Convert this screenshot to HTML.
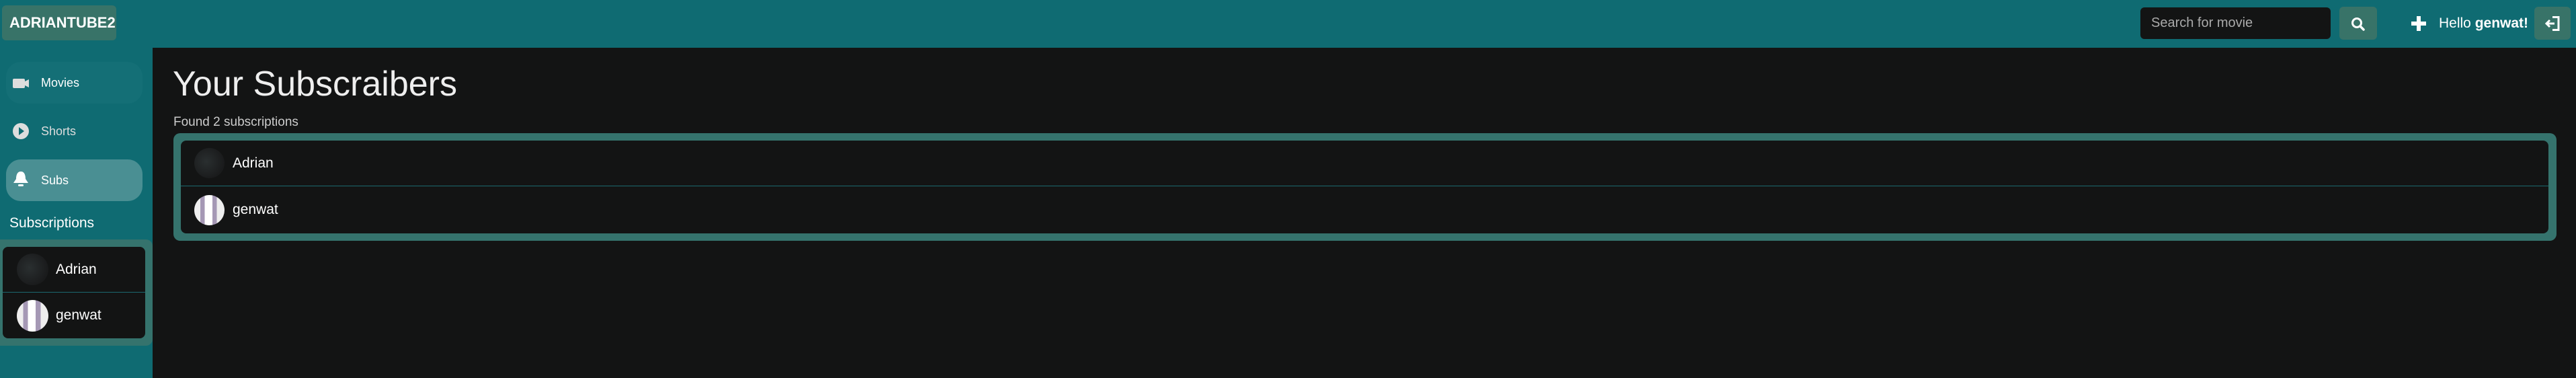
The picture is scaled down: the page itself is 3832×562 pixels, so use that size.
<!DOCTYPE html>
<html><head><style>
*{margin:0;padding:0;box-sizing:border-box}
body{width:3832px;height:562px;background:#0f6b72;font-family:"Liberation Sans",sans-serif;position:relative;overflow:hidden;color:#fff}
.abs{position:absolute}
.logo{left:3px;top:8px;width:170px;height:52px;background:#387368;border-radius:6px;font-weight:bold;font-size:22px;line-height:52px;padding-left:11px;color:#fff}
.pill{left:9px;width:203px;height:62px;border-radius:22px;font-size:18px;line-height:62px;padding-left:52px}
.main{left:227px;top:71px;width:3605px;height:491px;background:#131414}
.box{background:#35736d;border-radius:10px}
.inner{background:#131414;border-radius:8px;position:absolute}
.row{position:absolute;left:0;right:0;display:flex;align-items:center;font-size:21px}
.av{border-radius:50%;flex:none}
.a1{background:radial-gradient(circle at 40% 45%,#2a2f30,#1a1b1c 70%)}
.a2{background:linear-gradient(90deg,#eee 0 20%,#a598b5 20% 35%,#fff 35% 60%,#a598b5 60% 75%,#eee 75%)}
</style></head><body>
<div class="abs logo">ADRIANTUBE2</div>
<div class="abs pill" style="top:92px;background:#146f76">Movies</div>
<svg class="abs" style="left:19px;top:117px" width="25" height="14"><rect x="0" y="0" width="18" height="14" rx="2" fill="#ddd"/><path d="M18 4 L24 1 V13 L18 10Z" fill="#ddd"/></svg>
<div class="abs pill" style="top:164px;color:#ddd">Shorts</div>
<svg class="abs" style="left:19px;top:183px" width="24" height="24"><circle cx="12" cy="12" r="12" fill="#ddd"/><path d="M9 6 L17 12 L9 18Z" fill="#0f6b72"/></svg>
<div class="abs pill" style="top:237px;background:#4a8f93">Subs</div>
<svg class="abs" style="left:19px;top:254px" width="24" height="24"><path d="M12 1 C6 1 5 8 5 12 L1 18 H23 L19 12 C19 8 18 1 12 1Z" fill="#fff"/><rect x="8" y="20" width="8" height="3" rx="1.5" fill="#fff"/></svg>
<div class="abs" style="left:14px;top:320px;font-size:21px">Subscriptions</div>
<div class="abs box" style="left:0;top:356px;width:227px;height:158px;border-radius:0 10px 10px 0"></div>
<div class="inner" style="left:4px;top:367px;width:212px;height:136px">
 <div class="row" style="top:0;height:68px;border-bottom:1px solid #1b6a70"><div class="av a1" style="width:47px;height:47px;margin-left:21px"></div><span style="margin-left:11px">Adrian</span></div>
 <div class="row" style="top:68px;height:68px"><div class="av a2" style="width:47px;height:47px;margin-left:21px"></div><span style="margin-left:11px">genwat</span></div>
</div>
<div class="abs main"></div>
<div class="abs" style="left:257px;top:95px;font-size:52px;color:#eee">Your Subscraibers</div>
<div class="abs" style="left:258px;top:171px;font-size:19px;color:#ccc">Found 2 subscriptions</div>
<div class="abs box" style="left:258px;top:198px;width:3545px;height:160px"></div>
<div class="inner" style="left:269px;top:209px;width:3522px;height:138px">
 <div class="row" style="top:0;height:68px;border-bottom:1px solid #1b6a70"><div class="av a1" style="width:45px;height:45px;margin-left:20px"></div><span style="margin-left:12px">Adrian</span></div>
 <div class="row" style="top:68px;height:70px"><div class="av a2" style="width:45px;height:45px;margin-left:20px"></div><span style="margin-left:12px">genwat</span></div>
</div>
<div class="abs" style="left:3184px;top:11px;width:283px;height:47px;background:#131414;border-radius:6px;font-size:20px;color:#aaa;line-height:47px;padding-left:16px">Search for movie</div>
<div class="abs" style="left:3480px;top:10px;width:56px;height:49px;background:#387368;border-radius:6px"></div>
<svg class="abs" style="left:3497px;top:25px" width="22" height="22"><circle cx="9" cy="9" r="6.5" stroke="#fff" stroke-width="3" fill="none"/><path d="M14 14 L19 19" stroke="#fff" stroke-width="3.5" stroke-linecap="round"/></svg>
<svg class="abs" style="left:3587px;top:24px" width="22" height="22"><path d="M11 0 V22 M0 11 H22" stroke="#fff" stroke-width="6"/></svg>
<div class="abs" style="left:3628px;top:23px;font-size:21px">Hello <b>genwat!</b></div>
<div class="abs" style="left:3770px;top:10px;width:54px;height:49px;background:#387368;border-radius:6px"></div>
<svg class="abs" style="left:3785px;top:24px" width="24" height="22"><path d="M12 1.5 H21 V20.5 H12" stroke="#fff" stroke-width="3" fill="none"/><path d="M3 11 H15 M8 6 L3 11 L8 16" stroke="#fff" stroke-width="3" fill="none"/></svg>
</body></html>
